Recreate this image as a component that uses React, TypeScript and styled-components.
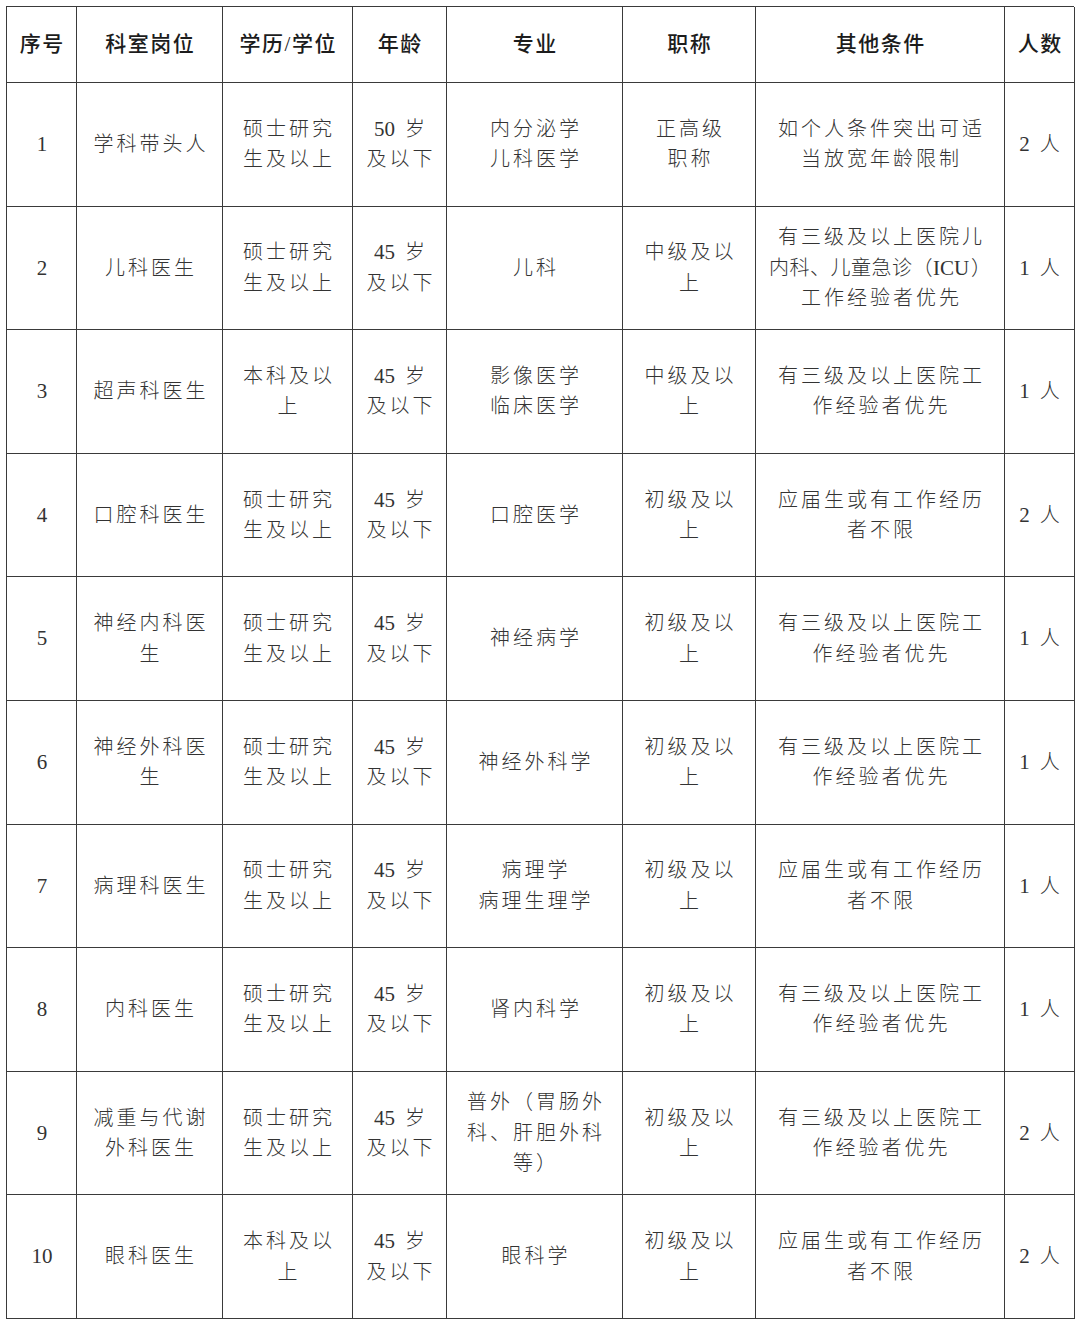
import styled, { createGlobalStyle } from 'styled-components';

const GlobalStyle = createGlobalStyle`
  html, body {
    margin: 0;
    padding: 0;
    background: #ffffff;
  }
  body {
    font-family: "Liberation Serif", "Noto Sans CJK SC", serif;
  }
`;

const Page = styled.div`
  width: 1080px;
  height: 1325px;
  padding: 6px 0 0 6px;
  box-sizing: border-box;
  background: #ffffff;
`;

const Grid = styled.div`
  display: grid;
  width: 1068px;
  grid-template-columns: 70px 146px 130px 94px 176px 133px 249px 70px;
  grid-template-rows: 76px repeat(10, 123.6px);
  border-top: 1.5px solid #3a3a3a;
  border-left: 1.5px solid #3a3a3a;
  box-sizing: border-box;
`;

const Cell = styled.div`
  display: flex;
  flex-direction: column;
  align-items: center;
  justify-content: center;
  text-align: center;
  white-space: pre;
  border-right: 1.5px solid #3a3a3a;
  border-bottom: 1.5px solid #3a3a3a;
  box-sizing: border-box;
  font-size: 20px;
  font-weight: 300;
  line-height: 30.5px;
  color: #333333;
`;

const HeadCell = styled(Cell)`
  font-weight: 500;
  font-size: 21px;
  color: #1c1c1c;
`;

const Line = styled.span<{ $spacing: number }>`
  display: block;
  letter-spacing: ${({ $spacing }) => $spacing}px;
  padding-left: ${({ $spacing }) => $spacing}px;
`;

const Latin = styled.span`
  font-family: "Liberation Serif", serif;
  font-size: 21px;
  font-weight: 400;
  letter-spacing: 0;
  margin-right: 2px;
`;

const renderLine = (line: string) =>
  line.split(/([0-9A-Za-z]+)/).map((part, i) =>
    /^[0-9A-Za-z]+$/.test(part) ? <Latin key={i}>{part}</Latin> : part
  );

const headers = ['序号', '科室岗位', '学历/学位', '年龄', '专业', '职称', '其他条件', '人数'];

const rows: string[][] = [
  ['1', '学科带头人', '硕士研究\n生及以上', '50 岁\n及以下', '内分泌学\n儿科医学', '正高级\n职称', '如个人条件突出可适\n当放宽年龄限制', '2 人'],
  ['2', '儿科医生', '硕士研究\n生及以上', '45 岁\n及以下', '儿科', '中级及以\n上', '有三级及以上医院儿\n内科、儿童急诊（ICU）\n工作经验者优先', '1 人'],
  ['3', '超声科医生', '本科及以\n上', '45 岁\n及以下', '影像医学\n临床医学', '中级及以\n上', '有三级及以上医院工\n作经验者优先', '1 人'],
  ['4', '口腔科医生', '硕士研究\n生及以上', '45 岁\n及以下', '口腔医学', '初级及以\n上', '应届生或有工作经历\n者不限', '2 人'],
  ['5', '神经内科医\n生', '硕士研究\n生及以上', '45 岁\n及以下', '神经病学', '初级及以\n上', '有三级及以上医院工\n作经验者优先', '1 人'],
  ['6', '神经外科医\n生', '硕士研究\n生及以上', '45 岁\n及以下', '神经外科学', '初级及以\n上', '有三级及以上医院工\n作经验者优先', '1 人'],
  ['7', '病理科医生', '硕士研究\n生及以上', '45 岁\n及以下', '病理学\n病理生理学', '初级及以\n上', '应届生或有工作经历\n者不限', '1 人'],
  ['8', '内科医生', '硕士研究\n生及以上', '45 岁\n及以下', '肾内科学', '初级及以\n上', '有三级及以上医院工\n作经验者优先', '1 人'],
  ['9', '减重与代谢\n外科医生', '硕士研究\n生及以上', '45 岁\n及以下', '普外（胃肠外\n科、肝胆外科\n等）', '初级及以\n上', '有三级及以上医院工\n作经验者优先', '2 人'],
  ['10', '眼科医生', '本科及以\n上', '45 岁\n及以下', '眼科学', '初级及以\n上', '应届生或有工作经历\n者不限', '2 人'],
];

export default function App() {
  return (
    <Page>
      <GlobalStyle />
      <Grid>
        {headers.map((h) => (
          <HeadCell key={h}>
            <Line $spacing={1.5}>{h}</Line>
          </HeadCell>
        ))}
        {rows.map((row, r) =>
          row.map((text, c) => (
            <Cell key={`${r}-${c}`}>
              {text.split('\n').map((line, l) => (
                <Line key={l} $spacing={line.includes('ICU') ? 0.5 : 3}>
                  {renderLine(line)}
                </Line>
              ))}
            </Cell>
          ))
        )}
      </Grid>
    </Page>
  );
}
